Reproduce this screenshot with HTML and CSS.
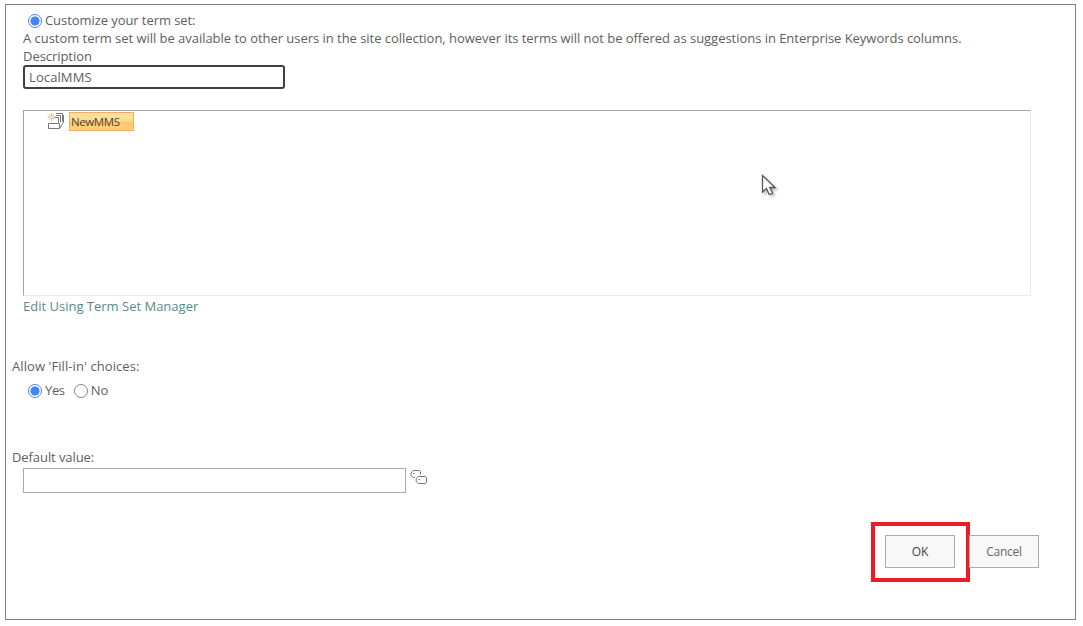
FILE: index.html
```html
<!DOCTYPE html>
<html lang="en">
<head>
<meta charset="utf-8">
<title>Term set settings</title>
<link rel="stylesheet" href="styles.css">
</head>
<body>
<main class="frame">
  <section class="termset">
    <label class="choice"><span class="radio on"></span><span class="t-custom">Customize your term set:</span></label>
    <p class="line"><span class="t-info">A custom term set will be available to other users in the site collection, however its terms will not be offered as suggestions in Enterprise Keywords columns.</span></p>
    <p class="line"><span class="t-desc">Description</span></p>
    <div class="description"><span class="t-local">LocalMMS</span></div>
    <div class="tree">
      <div class="node">
        <svg class="set-icon" width="18" height="18" viewBox="0 0 18 18" fill="none">
          <path d="M1.500 11.500h11v5h-11zM13 16l3.500-6V3M7.500 5.500h4v5M9 3.500h4.500v7M9 1.500h6.500v8" stroke="#777"/>
          <path d="M4.500 1v8M.5 5h8M2 2.500l5 5M7 2.500l-5 5" stroke="#e5ae7c"/>
          <circle cx="4.500" cy="5" r="1.200" fill="#fff3dc"/>
        </svg>
        <span class="selected"><span class="t-new">NewMMS</span></span>
      </div>
    </div>
    <a class="line link"><span class="t-edit">Edit Using Term Set Manager</span></a>
  </section>
  <section class="fillin">
    <p class="line"><span class="t-allow">Allow 'Fill-in' choices:</span></p>
    <div class="options">
      <label class="choice"><span class="radio on"></span><span class="t-yes">Yes</span></label>
      <label class="choice no"><span class="radio"></span><span>No</span></label>
    </div>
  </section>
  <section class="default">
    <p class="line"><span class="t-default">Default value:</span></p>
    <div class="picker">
      <div class="field"></div>
      <svg class="tags" width="18" height="16" viewBox="0 0 18 16" fill="none" stroke="#777">
        <path d="M5 8.500H3.300L1 6.500V4L3.300 1.500H9.500L10.500 2.500V5.500M8.300 7.500H15.500L16.500 8.500V13.500L15.500 14.500H8.300L6.200 12.500V9.600z"/>
        <path d="M3 4.500h1.500M8.300 10.500h1.500"/>
      </svg>
    </div>
  </section>
  <footer class="actions">
    <div class="highlight"><button class="btn ok">OK</button></div>
    <button class="btn cancel">Cancel</button>
  </footer>
  <svg class="cursor" width="20" height="26" viewBox="0 0 20 26">
    <path d="M1.500 1.500V18l4-3.500 2.700 6 3.300-1.500-2.700-5.500H14z" fill="#fff" stroke="#555" stroke-width="1.300"/>
  </svg>
</main>
</body>
</html>
```
FILE: styles.css
```css
* { box-sizing: border-box; }
body {
  margin: 0;
  background: #fff;
  color: #606060;
  font: 13px/18px "Open Sans", "Noto Sans", sans-serif;
}
p { margin: 0; }
.frame {
  position: relative;
  width: 1071px;
  height: 616px;
  margin: 4px 0 0 5px;
  padding-top: 6px;
  border: 1px solid #808080;
}
.line { display: block; height: 18px; white-space: nowrap; }
.termset { padding-left: 17px; }
.choice { display: flex; align-items: center; height: 18px; padding-left: 5px; white-space: nowrap; }
.radio {
  width: 14px;
  height: 14px;
  margin: 2px 3px 0 0;
  border: 1px solid #858585;
  border-radius: 50%;
}
.radio.on { border-color: #4285f4; background: radial-gradient(circle, #4285f4 4.2px, #fff 4.9px); }
.t-custom { letter-spacing: -.07px; }
.t-info { letter-spacing: -.033px; }
.t-desc { letter-spacing: -.05px; }
.t-allow { letter-spacing: .08px; }
.t-default { letter-spacing: -.08px; }
.t-yes { letter-spacing: -.35px; }
.t-local { letter-spacing: .1px; }
.t-new { letter-spacing: -.4px; }
.description {
  width: 262px;
  height: 24px;
  padding: 1px 4px;
  border: 2px solid #404040;
  border-radius: 3px;
}
.tree {
  width: 1008px;
  height: 186px;
  margin-top: 21px;
  padding: 1px 0 0 23px;
  border: 1px solid #e9e9e9;
  border-top-color: #a5a5a5;
  border-left-color: #a5a5a5;
}
.node { display: flex; gap: 4px; }
.selected {
  width: 65px;
  height: 19px;
  padding-left: 1px;
  border: 1px solid #f9ab63;
  background: linear-gradient(#ffe3a0, #ffdc91 48%, #ffc56c 52%, #ffd27d);
  color: #4c442f;
  font-size: 11.5px;
  line-height: 17px;
}
.link { margin-top: 1px; color: #568b8b; }
.fillin { margin-top: 42px; padding-left: 6px; }
.options { display: flex; margin-top: 6px; padding-left: 11px; }
.no { padding-left: 9px; }
.default { margin-top: 49px; padding-left: 6px; }
.picker { display: flex; gap: 4px; margin-top: 2px; padding-left: 11px; }
.field { width: 383px; height: 25px; border: 1px solid #ababab; }
.tags { margin-top: 1px; }
.actions { display: flex; align-items: flex-start; margin: 29px 0 0 865px; }
.highlight { width: 99px; height: 60px; padding: 9px 10px; border: 4px solid #ed1c24; }
.btn {
  display: block;
  width: 70px;
  height: 33px;
  padding: 0;
  border: 1px solid #ababab;
  background: #f8f8f8;
  color: #666;
  font: 12px/31px "Open Sans", "Noto Sans", sans-serif;
}
.ok { color: #444; }
.cancel { margin: 13px 0 0 -1px; letter-spacing: -.3px; }
.cursor { position: absolute; left: 755px; top: 169px; filter: drop-shadow(2px 2px 1px rgba(0, 0, 0, .25)); }
```
